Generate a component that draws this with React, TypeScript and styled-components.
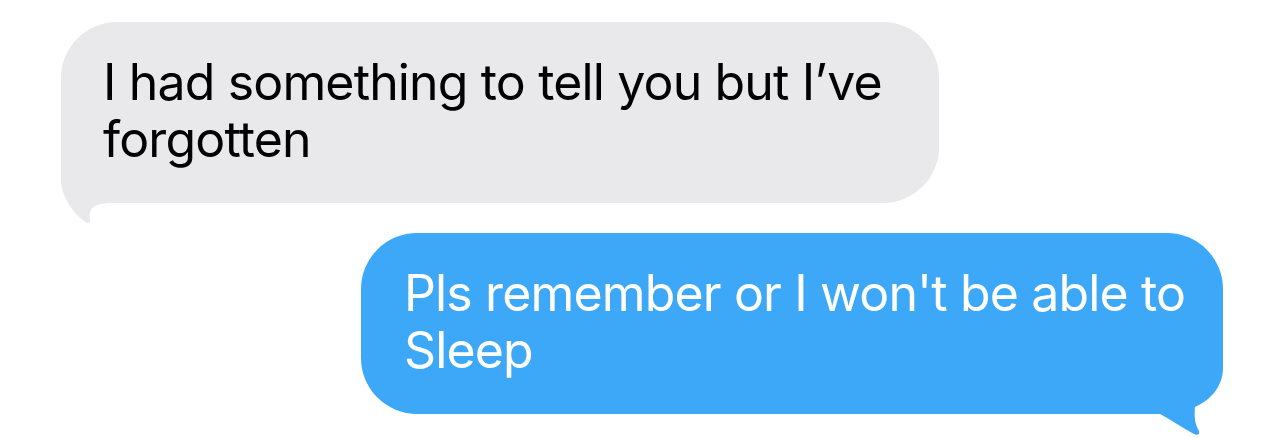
import styled, { createGlobalStyle } from "styled-components";

const GlobalStyle = createGlobalStyle`
  html, body {
    margin: 0;
    padding: 0;
    background: #ffffff;
  }
  body {
    font-family: "Inter", "Liberation Sans", sans-serif;
  }
`;

const Thread = styled.main`
  width: 1284px;
  height: 438px;
  box-sizing: border-box;
  padding: 22px 61px 0;
  display: flex;
  flex-direction: column;
  gap: 30px;
  background: #fff;
  overflow: hidden;
`;

const Bubble = styled.div<{ $mine?: boolean }>`
  position: relative;
  box-sizing: border-box;
  width: ${(p) => (p.$mine ? 862 : 878)}px;
  align-self: ${(p) => (p.$mine ? "flex-end" : "flex-start")};
  padding: 32px 24px 35px ${(p) => (p.$mine ? 43 : 42)}px;
  border-radius: 56px;
  background: ${(p) => (p.$mine ? "#3da8f8" : "#e9e9eb")};
  color: ${(p) => (p.$mine ? "#ffffff" : "#000000")};
`;

const Text = styled.p`
  position: relative;
  z-index: 1;
  margin: 0;
  font-size: 50px;
  line-height: 57px;
  letter-spacing: -0.85px;
`;

const Tail = styled.svg<{ $mine?: boolean }>`
  position: absolute;
  z-index: 0;
  bottom: -22px;
  ${(p) => (p.$mine ? "right: 0;" : "left: 0;")}
  width: 80px;
  height: 80px;
  overflow: visible;
`;

function GrayTail() {
  return (
    <Tail viewBox="0 0 80 80">
      <path
        d="M0 0 L0 34 C0 50 10 66 23 76 C26 79 30 79 29 74 C28 68 30 62 36 60 C40 58.5 46 58 52 58 L80 58 L80 0 Z"
        fill="#e9e9eb"
      />
    </Tail>
  );
}

function BlueTail() {
  return (
    <Tail $mine viewBox="0 0 80 80">
      <path
        d="M80 0 L80 12 C80 30 68 44 52 51 C51 60 52 68 55 73 C58 78 55 80 51 78 C40 72 28 64 17 58 L0 58 L0 0 Z"
        fill="#3da8f8"
      />
    </Tail>
  );
}

export default function App() {
  return (
    <>
      <GlobalStyle />
      <Thread>
        <Bubble>
          <GrayTail />
          <Text>I had something to tell you but I’ve forgotten</Text>
        </Bubble>
        <Bubble $mine>
          <BlueTail />
          <Text>Pls remember or I won't be able to Sleep</Text>
        </Bubble>
      </Thread>
    </>
  );
}
